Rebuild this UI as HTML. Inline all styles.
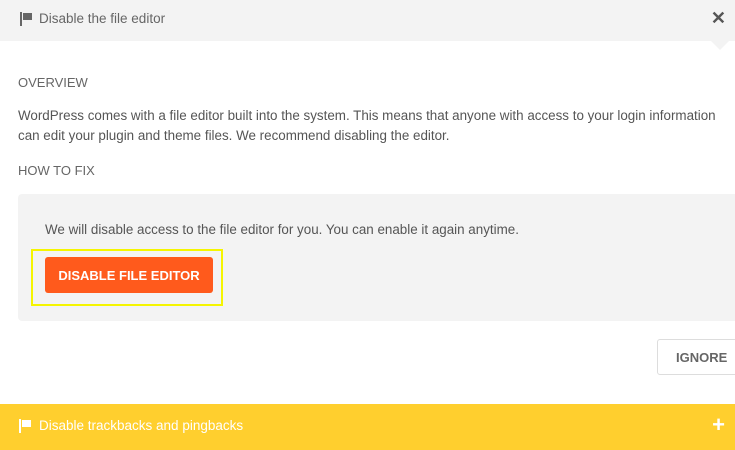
<!DOCTYPE html>
<html><head><style>
*{margin:0;padding:0;box-sizing:border-box}
body{width:735px;height:450px;overflow:hidden;background:#fff;font-family:"Liberation Sans",sans-serif;color:#555;position:relative}
.hd{position:absolute;left:0;top:0;width:735px;height:41px;background:#f3f3f3}
.hd .t{position:absolute;left:39px;top:11px;font-size:13.5px;color:#666}
.flag{position:absolute;width:13px;height:14px}
.flag .p{position:absolute;left:0;top:0;width:2px;height:14px}
.flag .f{position:absolute;left:3px;top:1px;width:9px;height:7px}
.x{position:absolute;right:9px;top:8px;font-size:18px;font-weight:bold;color:#555}
.tri{position:absolute;left:711px;top:41px;width:0;height:0;border-left:9px solid transparent;border-right:9px solid transparent;border-top:9px solid #f3f3f3}
.h{position:absolute;left:18px;font-size:13px;color:#666}
.p1{position:absolute;left:18px;top:106px;font-size:13.4px;line-height:20px;color:#555;width:715px;white-space:nowrap}
.box{position:absolute;left:18px;top:194px;width:730px;height:127px;background:#f3f3f3;border-radius:4px}
.box .t{position:absolute;left:27px;top:28px;font-size:13.4px;color:#555}
.ol{position:absolute;left:31px;top:249px;width:192px;height:57px;border:2px solid #f5f500}
.btn{position:absolute;left:45px;top:257px;width:168px;height:36px;background:#ff5a1c;border-radius:3px;color:#fff;font-weight:bold;font-size:13px;text-align:center;line-height:38px}
.ig{position:absolute;left:657px;top:339px;width:85px;height:36px;border:1px solid #ddd;border-radius:3px;background:#fff;font-weight:bold;font-size:13px;line-height:36px;padding-left:18px;color:#666}
.yb{position:absolute;left:0;top:404px;width:735px;height:46px;background:#ffcf2e}
.yb .t{position:absolute;left:39px;top:14px;font-size:13.5px;color:#fff}
.plus{position:absolute;right:10px;top:8px;font-size:22px;font-weight:bold;color:#fff}
</style></head><body>
<div class="hd">
<div class="flag" style="left:20px;top:12px"><div class="p" style="background:#666"></div><div class="f" style="background:#666"></div></div>
<div class="t">Disable the file editor</div>
<div class="x">✕</div>
</div>
<div class="tri"></div>
<div class="h" style="top:75px">OVERVIEW</div>
<div class="p1">WordPress comes with a file editor built into the system. This means that anyone with access to your login information<br>can edit your plugin and theme files. We recommend disabling the editor.</div>
<div class="h" style="top:163px">HOW TO FIX</div>
<div class="box"><div class="t">We will disable access to the file editor for you. You can enable it again anytime.</div></div>
<div class="ol"></div>
<div class="btn">DISABLE FILE EDITOR</div>
<div class="ig">IGNORE</div>
<div class="yb">
<div class="flag" style="left:19px;top:15px"><div class="p" style="background:#fff"></div><div class="f" style="background:#fff"></div></div>
<div class="t">Disable trackbacks and pingbacks</div>
<div class="plus">+</div>
</div>
</body></html>
